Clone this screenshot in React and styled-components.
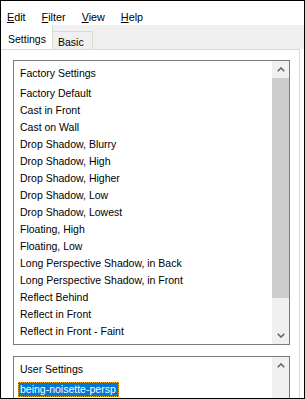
import React from 'react';
import styled, { createGlobalStyle } from 'styled-components';

const GlobalStyle = createGlobalStyle`
  html, body {
    margin: 0;
    padding: 0;
    background: #fff;
  }
  body {
    font-family: "Liberation Sans", Arial, sans-serif;
    font-size: 10.5px;
    color: #000;
  }
`;

const Window = styled.div`
  width: 305px;
  height: 399px;
  box-sizing: border-box;
  border: 1px solid #000;
  background: #fff;
  display: flex;
  flex-direction: column;
  overflow: hidden;
`;

const MenuBar = styled.div`
  height: 24px;
  box-sizing: border-box;
  padding: 9px 0 0 6px;
  display: flex;
  gap: 16px;
  line-height: 14px;
  font-size: 10.8px;
`;

const MenuItem = styled.span`
  u {
    text-decoration: underline;
    text-underline-offset: 1px;
  }
`;

const TabStrip = styled.div`
  height: 24px;
  background: #f0f0f0;
  display: flex;
  align-items: flex-end;
  flex-shrink: 0;
`;

const Tab = styled.div`
  box-sizing: border-box;
  width: ${(p) => (p.$active ? '52px' : '40px')};
  height: ${(p) => (p.$active ? '24px' : '18px')};
  padding: ${(p) => (p.$active ? '7px 0 0 7px' : '3px 0 0 5px')};
  line-height: 14px;
  background: ${(p) => (p.$active ? '#fff' : '#f0f0f0')};
  border-right: 1px solid #d9d9d9;
  border-top: ${(p) => (p.$active ? 'none' : '1px solid #d9d9d9')};
`;

const Panel = styled.div`
  flex: 1;
  margin-right: 4px;
  border-top: 1px solid #d9d9d9;
  border-right: 1px solid #d9d9d9;
  background: #fff;
  padding: 10px 9px 0 12px;
  display: flex;
  flex-direction: column;
  gap: 11px;
  min-height: 0;
`;

const ListBox = styled.div`
  flex-shrink: 0;
  height: ${(p) => p.$height}px;
  border: 1px solid #7a7a7a;
  display: flex;
  overflow: hidden;
`;

const ListContent = styled.div`
  flex: 1;
  padding: 4px 0 0 0;
  display: flex;
  flex-direction: column;
`;

const GroupHeader = styled.div`
  height: 17px;
  line-height: 17px;
  padding-left: 6px;
  margin-bottom: 3px;
`;

const Item = styled.div`
  height: 17px;
  line-height: 17px;
  padding-left: 4px;
  white-space: nowrap;
  display: flex;
  align-items: center;
`;

const ItemLabel = styled.span`
  padding: 0 3px 0 2px;
  line-height: 15px;
  background: ${(p) => (p.$selected ? '#0078d7' : 'transparent')};
  color: ${(p) => (p.$selected ? '#fff' : '#000')};
  outline: ${(p) => (p.$selected ? '1px dotted #f5a623' : 'none')};
  outline-offset: -1px;
`;

const ScrollBar = styled.div`
  width: 17px;
  background: #f0f0f0;
  display: flex;
  flex-direction: column;
  flex-shrink: 0;
`;

const ArrowButton = styled.div`
  height: 17px;
  display: flex;
  align-items: center;
  justify-content: center;
  flex-shrink: 0;
`;

const Thumb = styled.div`
  height: ${(p) => p.$height}px;
  margin-top: ${(p) => p.$offset}px;
  background: #cdcdcd;
  flex-shrink: 0;
`;

const Track = styled.div`
  flex: 1;
`;

const Chevron = ({ down }) => (
  <svg width="8" height="5" viewBox="0 0 8 5">
    <path
      d={down ? 'M0.7 0.8 L4 4 L7.3 0.8' : 'M0.7 4.2 L4 1 L7.3 4.2'}
      fill="none"
      stroke="#606060"
      strokeWidth="1.5"
    />
  </svg>
);

const factory = [
  'Factory Default',
  'Cast in Front',
  'Cast on Wall',
  'Drop Shadow, Blurry',
  'Drop Shadow, High',
  'Drop Shadow, Higher',
  'Drop Shadow, Low',
  'Drop Shadow, Lowest',
  'Floating, High',
  'Floating, Low',
  'Long Perspective Shadow, in Back',
  'Long Perspective Shadow, in Front',
  'Reflect Behind',
  'Reflect in Front',
  'Reflect in Front - Faint',
];

const App = () => (
  <>
    <GlobalStyle />
    <Window>
      <MenuBar>
        <MenuItem><u>E</u>dit</MenuItem>
        <MenuItem><u>F</u>ilter</MenuItem>
        <MenuItem><u>V</u>iew</MenuItem>
        <MenuItem><u>H</u>elp</MenuItem>
      </MenuBar>
      <TabStrip>
        <Tab $active>Settings</Tab>
        <Tab>Basic</Tab>
      </TabStrip>
      <Panel>
        <ListBox $height={283}>
          <ListContent>
            <GroupHeader>Factory Settings</GroupHeader>
            {factory.map((name) => (
              <Item key={name}>
                <ItemLabel>{name}</ItemLabel>
              </Item>
            ))}
          </ListContent>
          <ScrollBar>
            <ArrowButton><Chevron /></ArrowButton>
            <Thumb $height={220} $offset={0} />
            <Track />
            <ArrowButton><Chevron down /></ArrowButton>
          </ScrollBar>
        </ListBox>
        <ListBox $height={80}>
          <ListContent>
            <GroupHeader>User Settings</GroupHeader>
            <Item>
              <ItemLabel $selected>being-noisette-persp</ItemLabel>
            </Item>
          </ListContent>
          <ScrollBar>
            <ArrowButton><Chevron /></ArrowButton>
            <Thumb $height={40} $offset={24} />
            <Track />
          </ScrollBar>
        </ListBox>
      </Panel>
    </Window>
  </>
);

export default App;
